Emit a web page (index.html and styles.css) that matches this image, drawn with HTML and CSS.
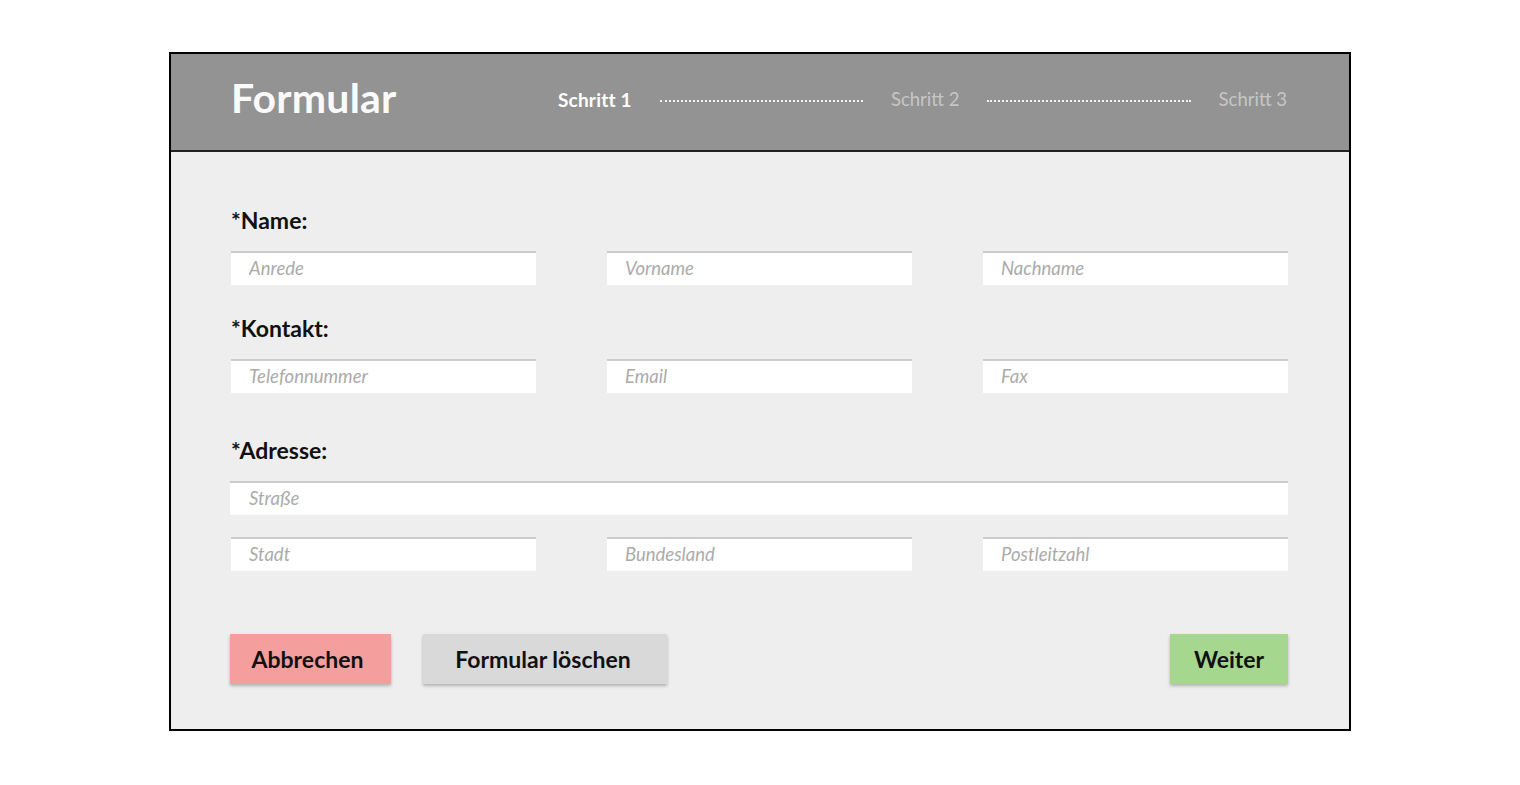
FILE: index.html
```html
<!DOCTYPE html>
<html lang="de">
<head>
<meta charset="utf-8">
<title>Formular</title>
<link rel="stylesheet" href="styles.css">
</head>
<body>
<div class="card">
  <header class="head">
    <h1 class="title">Formular</h1>
    <nav class="steps">
      <span class="step active">Schritt 1</span>
      <span class="line"></span>
      <span class="step">Schritt 2</span>
      <span class="line"></span>
      <span class="step">Schritt 3</span>
    </nav>
  </header>
  <form class="body">
    <div class="label l-name">*Name:</div>
    <div class="row">
      <input class="field" placeholder="Anrede">
      <input class="field" placeholder="Vorname">
      <input class="field" placeholder="Nachname">
    </div>
    <div class="label l-kontakt">*Kontakt:</div>
    <div class="row">
      <input class="field" placeholder="Telefonnummer">
      <input class="field" placeholder="Email">
      <input class="field" placeholder="Fax">
    </div>
    <div class="label l-adresse">*Adresse:</div>
    <input class="field full" placeholder="Straße">
    <div class="row r-city">
      <input class="field" placeholder="Stadt">
      <input class="field" placeholder="Bundesland">
      <input class="field" placeholder="Postleitzahl">
    </div>
    <div class="actions">
      <button type="button" class="btn cancel">Abbrechen</button>
      <button type="button" class="btn clear">Formular löschen</button>
      <button type="button" class="btn next">Weiter</button>
    </div>
  </form>
</div>
</body>
</html>
```

FILE: styles.css
```css
* { box-sizing: border-box; }
html, body { margin: 0; padding: 0; background: #ffffff; }
body {
  font-family: Lato, "Open Sans", sans-serif;
  padding-top: 52px;
}
.card {
  width: 1182px;
  margin: 0 auto;
  border: 2px solid #000;
  background: #eeeeee;
}
.head {
  height: 98px;
  background: #939393;
  border-bottom: 2px solid #222;
  display: flex;
  align-items: center;
  padding: 0 62px 6px 60px;
}
.title {
  margin: 0;
  font-size: 41px;
  font-weight: 700;
  color: #fafafa;
  width: 327px;
  letter-spacing: 0.2px;
  position: relative;
  top: -2px;
}
.steps {
  flex: 1;
  display: flex;
  align-items: center;
  font-size: 18.5px;
  color: #c6c6c6;
}
.step { white-space: nowrap; }
.step.active { color: #ffffff; font-weight: 700; font-size: 19px; letter-spacing: 0.2px; }
.line {
  flex: 1;
  height: 0;
  border-top: 2px dotted #f2f2f2;
  margin: 3px 28px 0;
}
.body {
  margin: 0;
  padding: 53px 61px 45px 59px;
  display: flex;
  flex-direction: column;
}
.label {
  font-size: 23px;
  font-weight: 700;
  color: #111;
  line-height: 30px;
  margin-bottom: 16px;
  margin-left: 1px;
}
.l-kontakt { margin-top: 28px; }
.l-adresse { margin-top: 42px; }
.row {
  display: grid;
  grid-template-columns: 305px 305px 305px;
  justify-content: space-between;
  margin-left: 1px;
}
.r-city { margin-top: 22px; }
.field {
  height: 34px;
  border: none;
  border-top: 2px solid #cccccc;
  background: #ffffff;
  padding: 0 18px 3px;
  font-family: Lato, "Open Sans", sans-serif;
  font-size: 18.5px;
  font-style: italic;
  color: #555;
  outline: none;
  margin: 0;
}
.field::placeholder { color: #ababab; }
.full { width: 100%; padding-left: 19px; }
.actions {
  display: flex;
  margin-top: 63px;
}
.btn {
  height: 50px;
  border: none;
  font-family: Lato, "Open Sans", sans-serif;
  font-size: 23px;
  font-weight: 700;
  color: #111;
  box-shadow: 0 2px 3px rgba(0,0,0,0.25);
  padding: 0 0 1px;
  cursor: pointer;
}
.cancel { background: #f59e9e; width: 161px; padding-right: 6px; }
.clear { background: #d9d9d9; width: 244px; margin-left: 32px; padding-right: 4px; }
.next { background: #a6d78f; width: 118px; margin-left: auto; }
```
